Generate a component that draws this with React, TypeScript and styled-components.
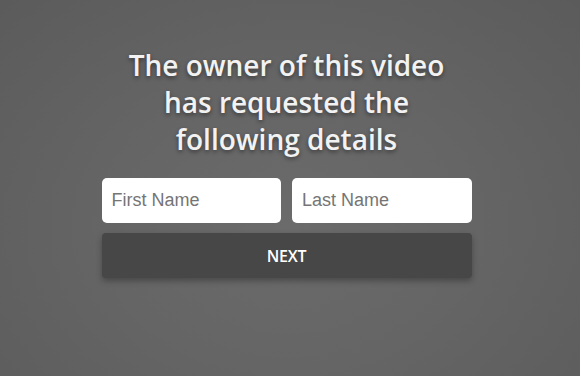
import styled, {createGlobalStyle} from "styled-components";

const GlobalStyle = createGlobalStyle`
    html, body {
        margin: 0;
        padding: 0;
        height: 100%;
    }

    body {
        font-family: "Open Sans", "Liberation Sans", sans-serif;
    }
`

const StyledPageDiv = styled.div`
    box-sizing: border-box;
    width: 100%;
    height: 376px;
    padding: 47px 7px 0 0;
    display: flex;
    justify-content: center;
    background: radial-gradient(ellipse at 50% 60%, #6b6b6b 0%, #656565 45%, #5b5b5b 100%);
`

const StyledFormDiv = styled.div`
    width: 370px;
    display: flex;
    flex-direction: column;
    align-items: center;
`

const StyledTitleH1 = styled.h1`
    margin: 0 0 20px;
    max-width: 340px;
    font-size: 28px;
    font-weight: 600;
    line-height: 37px;
    text-align: center;
    color: #f2f2f2;
    text-shadow: 0 2px 4px rgba(0, 0, 0, 0.45);
`

const StyledNameRowDiv = styled.div`
    width: 100%;
    display: grid;
    grid-template-columns: 1fr 1fr;
    gap: 11px;
`

const StyledInput = styled.input`
    box-sizing: border-box;
    width: 100%;
    height: 45px;
    padding: 0 10px;
    border: none;
    border-radius: 5px;
    background: #fff;
    font-family: "Liberation Sans", Arial, sans-serif;
    font-size: 18px;
    color: #333;
    outline: none;

    &::placeholder {
        color: #757575;
    }
`

const StyledNextButton = styled.button`
    box-sizing: border-box;
    width: 100%;
    height: 45px;
    margin-top: 10px;
    border: none;
    border-radius: 4px;
    background: #474747;
    color: #fff;
    font-family: "Open Sans", sans-serif;
    font-size: 16px;
    font-weight: 600;
    letter-spacing: -0.3px;
    cursor: pointer;
    box-shadow: 0 3px 6px rgba(0, 0, 0, 0.3);
`

export default function App() {
    return <>
        <GlobalStyle/>
        <StyledPageDiv>
            <StyledFormDiv>
                <StyledTitleH1>The owner of this video has requested the following details</StyledTitleH1>
                <StyledNameRowDiv>
                    <StyledInput type="text" placeholder="First Name"/>
                    <StyledInput type="text" placeholder="Last Name"/>
                </StyledNameRowDiv>
                <StyledNextButton>NEXT</StyledNextButton>
            </StyledFormDiv>
        </StyledPageDiv>
    </>
}
